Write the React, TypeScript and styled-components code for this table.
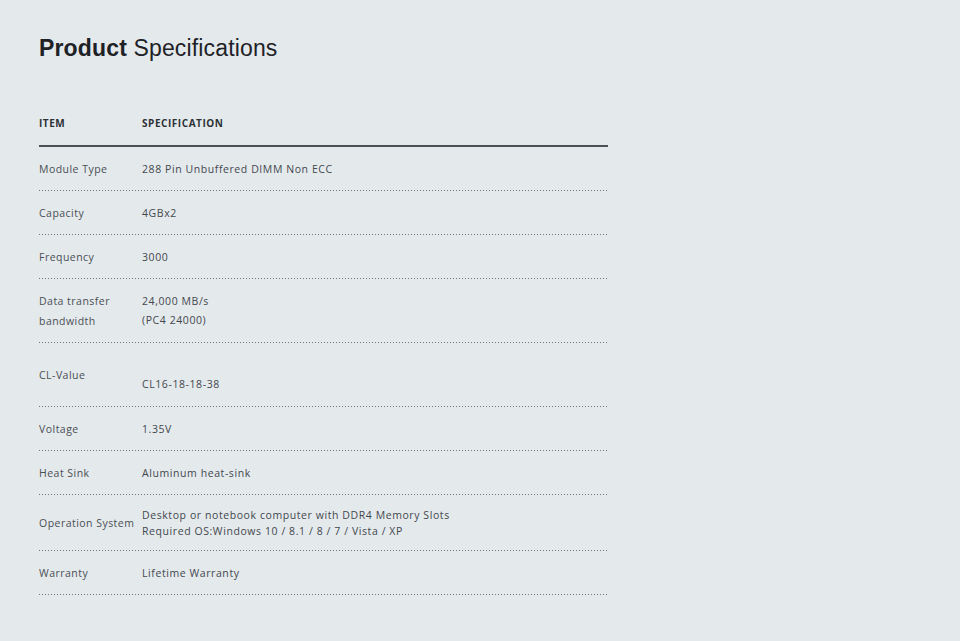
import React from "react";
import styled, { createGlobalStyle } from "styled-components";

const Global = createGlobalStyle`
  html, body { margin: 0; padding: 0; background: #e4e9ec; }
  body { font-family: "Open Sans", "Noto Sans", sans-serif; }
`;

const Page = styled.div`
  width: 960px;
  min-height: 641px;
  box-sizing: border-box;
  padding: 34px 0 0 39px;
  background: #e4e9ec;
`;

const Title = styled.h1`
  margin: 0;
  font-family: "Liberation Sans", Arial, sans-serif;
  font-size: 23px;
  font-weight: 400;
  color: #1e2227;
  line-height: 28px;
  letter-spacing: 0.15px;
  b { font-weight: 700; }
`;

const Table = styled.div`
  width: 569px;
  margin-top: 39px;
  display: flex;
  flex-direction: column;
`;

const HeadRow = styled.div`
  display: grid;
  grid-template-columns: 103px 1fr;
  height: 44px;
  align-items: center;
  border-bottom: 2px solid #4d5155;
`;

const HeadCell = styled.div`
  font-size: 10px;
  font-weight: 700;
  letter-spacing: 0.55px;
  color: #2d3136;
`;

const Row = styled.div<{ $h: number }>`
  display: grid;
  grid-template-columns: 103px 1fr;
  height: ${(p) => p.$h}px;
  align-items: center;
  background-image: linear-gradient(to right, #6f747a 1px, transparent 1px);
  background-size: 3px 1px;
  background-repeat: repeat-x;
  background-position: left bottom;
`;

const Label = styled.div`
  font-size: 10.5px;
  letter-spacing: 0.47px;
  line-height: 20px;
  color: #4a4f55;
`;

const Value = styled.div<{ $lh?: number; $pt?: number }>`
  font-size: 10.5px;
  letter-spacing: 0.58px;
  line-height: ${(p) => p.$lh ?? 19}px;
  padding-top: ${(p) => p.$pt ?? 0}px;
  color: #43484e;
`;

const rows: { label: React.ReactNode; value: React.ReactNode; h: number; lh?: number; pt?: number }[] = [
  { label: "Module Type", value: "288 Pin Unbuffered DIMM Non ECC", h: 44 },
  { label: "Capacity", value: "4GBx2", h: 44 },
  { label: "Frequency", value: "3000", h: 44 },
  { label: <>Data transfer<br />bandwidth</>, value: <>24,000 MB/s<br />(PC4 24000)</>, h: 64 },
  { label: "CL-Value", value: "CL16-18-18-38", h: 64, pt: 19 },
  { label: "Voltage", value: "1.35V", h: 44 },
  { label: "Heat Sink", value: "Aluminum heat-sink", h: 44 },
  {
    label: "Operation System",
    value: <>Desktop or notebook computer with DDR4 Memory Slots<br />Required OS:Windows 10 / 8.1 / 8 / 7 / Vista / XP</>,
    h: 56,
    lh: 16,
  },
  { label: "Warranty", value: "Lifetime Warranty", h: 44 },
];

export default function App() {
  return (
    <>
      <Global />
      <Page>
        <Title>
          <b>Product</b> Specifications
        </Title>
        <Table>
          <HeadRow>
            <HeadCell>ITEM</HeadCell>
            <HeadCell>SPECIFICATION</HeadCell>
          </HeadRow>
          {rows.map((r, i) => (
            <Row key={i} $h={r.h}>
              <Label>{r.label}</Label>
              <Value $lh={r.lh} $pt={r.pt}>{r.value}</Value>
            </Row>
          ))}
        </Table>
      </Page>
    </>
  );
}
